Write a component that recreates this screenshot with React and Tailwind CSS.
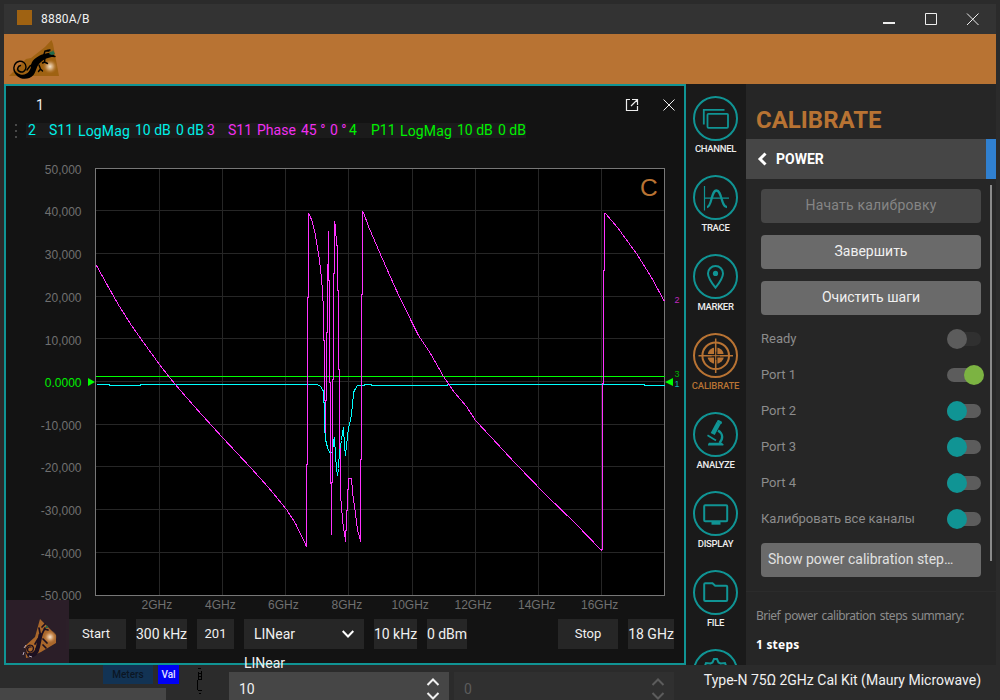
import React from 'react';

const TRACE_ROWS = [
  { color: 'text-[#00f0e8]', start: 'w-[180px]', cells: [['2', 'w-[21px]'], ['S11', 'w-[29px]'], ['LogMag', 'w-[57px]'], ['10 dB', 'w-[41px]'], ['0 dB', 'w-[30px]']] },
  { color: 'text-[#f030f0]', start: 'w-[142px] -ml-px', cells: [['3', 'w-[21px]'], ['S11', 'w-[29px]'], ['Phase', 'w-[44px]'], ['45 °', 'w-[29px]'], ['0 °', 'w-[16px]']] },
  { color: 'text-[#00f000]', start: 'w-[179px]', cells: [['4', 'w-[22px]'], ['P11', 'w-[29px]'], ['LogMag', 'w-[57px]'], ['10 dB', 'w-[41px]'], ['0 dB', 'w-[28px]']] },
];

const GRID_X = [159, 222, 285, 348, 412, 475, 538, 601];
const GRID_Y = [210, 253, 296, 338, 381, 424, 466, 509, 552];
const Y_LABELS = [['50,000', 169], ['40,000', 211], ['30,000', 254], ['20,000', 297], ['10,000', 340], ['0.0000', 382], ['-10,000', 425], ['-20,000', 467], ['-30,000', 510], ['-40,000', 553], ['-50,000', 595]];
const X_LABELS = [['2GHz', 141.5], ['4GHz', 205], ['6GHz', 268], ['8GHz', 331.5], ['10GHz', 391.5], ['12GHz', 454.5], ['14GHz', 518], ['16GHz', 581]];

const PHASE =
  '96,265 107,285 119,306 131,325 143,342 159,364 169,377 180,390 193,405 212,426 222,437 236,452 250,467 268,487 286,509 295,523 306,546 306,464 307,464 307,297 308,297 308,213 309,214 312,222 315,235 318,253 320,268 322,290 323,310 323,340 324,340 324,400 325,400 325,432 325,400 326,400 326,332 327,332 327,264 328,264 328,230 328,280 329,280 329,382 330,382 330,483 331,483 331,534 331,482 332,482 332,379 333,379 333,273 334,273 334,221 335,226 336,245 337,245 337,290 338,290 338,369 339,369 339,448 340,448 340,494 341,506 342,518 343,528 344,532 345,541 345,530 346,530 346,510 347,510 347,489 348,489 348,478 351,478 352,490 353,500 354,505 355,514 356,520 357,530 359,536 360,541 360,459 361,459 361,294 362,294 362,211 363,212 368,226 380,254 396,290 412,323 418,335 430,353 443,376 454,392 466,406 475,420 490,436 515,463 545,494 575,523 601,550 601,549 602,549 602,383 603,383 603,270 604,270 604,213 605,213 617,227 625,238 636,253 651,277 664,301';

const MAG =
  '96,384 109,384 109,385 140,385 140,384 317,384 320,386 322,389 323,391 323,402 324,402 324,425 325,439 327,447 329,452 332,452 333,441 334,437 335,455 336,468 337,475 338,468 339,450 341,440 342,432 343,427 344,445 345,455 346,445 348,427 350,420 352,405 353,392 355,388 357,385 364,385 364,384 371,384 371,385 447,385 447,384 644,384 644,385 664,385';

function Chart() {
  return (
    <svg className="block h-[474px] w-[678px]" viewBox="6 139 678 474" fontFamily='"Liberation Sans", Arial, sans-serif'>
      <g shapeRendering="crispEdges">
        <rect x="95" y="168" width="570" height="428" fill="#000" />
        {GRID_X.map((x) => <rect key={x} x={x} y="168" width="1" height="427" fill="#262626" />)}
        {GRID_Y.map((y) => <rect key={y} x="95" y={y} width="569" height="1" fill="#262626" />)}
        <rect x="95.5" y="168.5" width="569" height="427" fill="none" stroke="#777" />
      </g>
      <text x="640" y="196" fontSize="24.500" fill="#b87333">C</text>
      <g fill="none" strokeWidth="1" shapeRendering="crispEdges" transform="translate(.5 .5)">
        <path d="M95 376H664" stroke="#00ff00" />
        <polyline points={MAG} stroke="#00ffff" />
        <polyline points={PHASE} stroke="#ff33ff" />
      </g>
      <path d="M88 378l7 4-7 4zM665 382l8-4v8z" fill="#00ff00" />
      <g fontSize="12">
        {Y_LABELS.map(([t, y]) => (
          <text key={t} x="81.500" y={y + 5} textAnchor="end" fill={t === '0.0000' ? '#00f000' : '#707070'}>{t}</text>
        ))}
        {X_LABELS.map(([t, x]) => <text key={t} x={x} y="609" fill="#707070">{t}</text>)}
      </g>
      <g fontSize="9">
        <text x="674.5" y="303" fill="#c028c0">2</text>
        <text x="674.5" y="377" fill="#00b000">3</text>
        <text x="674.5" y="386.500" fill="#10b0b0">1</text>
      </g>
    </svg>
  );
}

function Gecko() {
  return (
    <svg className="block h-[42px] w-[54px]" viewBox="8 39 54 42">
      <defs>
        <radialGradient id="orb">
          <stop offset="0" stopColor="#f4e2c8" />
          <stop offset=".45" stopColor="#c99a63" />
          <stop offset="1" stopColor="#a8661c" stopOpacity="0" />
        </radialGradient>
      </defs>
      <path d="M51.5 40 L53 44 L59 76 H9 L26 59 L31 58 L45 47Z" fill="#9f6212" />
      <circle cx="50" cy="66.500" r="7.500" fill="url(#orb)" />
      <g fill="none" stroke="#000" strokeLinecap="round" strokeLinejoin="round">
        <path d="M20.500 65.500c-3 .5-4 4.500-1 6 3 1.500 6.500-.5 6.500-4.500 0-4-3.500-6-6.500-5.700-4.500.5-7 6-5 10.200" strokeWidth="1.400" />
        <path d="M34 64l-4 2-3 4M39 65l1.500 4-2 2.500M40.500 69l2 2M43.500 56l1.500-5 4 0M47 50.500l3-.5M45 58l-.5 4 3 1.500M44.500 62l-2 1M50 56l5 .5" strokeWidth="1.400" />
      </g>
      <path d="M13.500 69C14.500 79 27 82 33.500 75C37 70 36 66 41 62C45 58 49 58 54.500 56L52 52.500L48 53L42 54.500C36 57 31 61 31 66C31 70 27 76 20.500 74.500C17 73.500 15 71 13.500 69Z" fill="#000" />
      <path d="M49 54l2-3 1 1 1-2 2 4-3 1z" fill="#226b4c" />
    </svg>
  );
}

function GeckoSmall() {
  return (
    <svg className="block h-[63px] w-[63px]" viewBox="6 600 63 63">
      <defs>
        <radialGradient id="orb2">
          <stop offset="0" stopColor="#f6e4d0" />
          <stop offset=".5" stopColor="#c98d55" />
          <stop offset="1" stopColor="#a5642b" stopOpacity="0" />
        </radialGradient>
      </defs>
      <path d="M40 619 L47 626 L56 635 V643 L41 652 L30 657 L26 658 L25 646 L35 637Z" fill="#a9672b" />
      <circle cx="50" cy="637" r="7" fill="url(#orb2)" />
      <g fill="none" stroke="#1c1020" strokeLinecap="round">
        <path d="M31 647c-3-1-5 3-2 5 4 1 6-4 3-6.500-5-2-8 4.500-5 8.500" strokeWidth="1.300" />
        <path d="M29 655c6 1 8-3 9-8l2.500-12" strokeWidth="4" />
        <path d="M41 636l4-8M38 639l-3 5M40 633l-1-5M44 629l4 1M42 627l3-3M43 639l4 4M38 646l-2 3M43 645l3 3" strokeWidth="1.700" />
      </g>
      <path d="M24 648l2-3M24 652l-1 3M29 656l3 1" stroke="#b8a8b8" />
      <path d="M45 628l2-3 1 3z" fill="#226b4c" />
    </svg>
  );
}

const ICONS = {
  CHANNEL: (
    <g strokeWidth="1.800">
      <path d="M10.800 28.500V13.800H31.500" />
      <rect x="14.500" y="17.800" width="20.500" height="14" rx="1" />
    </g>
  ),
  TRACE: (
    <g>
      <path d="M11.500 11V35.500M11.500 23.200H36" strokeWidth="1.200" />
      <path d="M14 32c5 0 4-16.500 9.500-16.500S28 32 34 32" strokeWidth="2.300" />
    </g>
  ),
  MARKER: (
    <g>
      <path d="M22.500 12.100c-4.300 0-7.500 3.200-7.500 7.300 0 4.800 7.500 14.300 7.500 14.300S30 24.200 30 19.400c0-4.100-3.200-7.300-7.500-7.300z" strokeWidth="2" />
      <circle cx="22.500" cy="19.400" r="2.600" fill="currentColor" stroke="none" />
    </g>
  ),
  CALIBRATE: (
    <g>
      <circle cx="22.700" cy="22.700" r="13.300" strokeWidth="2" />
      <circle cx="22.700" cy="22.700" r="8.300" fill="currentColor" stroke="none" />
      <path d="M22.700 12.500V33M12.500 22.700H33" stroke="#1a1a1a" strokeWidth="3.400" />
      <path d="M22.700 5.500V18.500M22.700 27V40M5.500 22.700H18.500M27 22.700H40" strokeWidth="1.500" />
      <path d="M22.700 18V27.500M18 22.700H27.500" strokeWidth="1" />
    </g>
  ),
  ANALYZE: (
    <g>
      <path d="M25.700 10.800l-6 11.200" strokeWidth="4.600" />
      <path d="M25.500 9.500l2 1" strokeWidth="3" strokeLinecap="round" />
      <path d="M14.500 23.300l8.500 5.200" strokeWidth="1.600" />
      <path d="M25 18.500c5 3 5.500 8 1.500 12.500" strokeWidth="2.300" />
      <path d="M15 33.500v-1.300l1-1.500h13l1.300 1.500v1.300z" fill="currentColor" stroke="none" />
    </g>
  ),
  DISPLAY: (
    <g>
      <rect x="11.200" y="14.200" width="23" height="16" rx="1" strokeWidth="2" />
      <path d="M18.500 32.200H27.500" strokeWidth="3" />
    </g>
  ),
  FILE: <path d="M11.200 14.200a1 1 0 0 1 1-1h7.300l2.700 2.500h11a1 1 0 0 1 1 1v13.300a1 1 0 0 1-1 1h-21a1 1 0 0 1-1-1z" strokeWidth="2" />,
};

function RailItem({ name, active }) {
  return (
    <div className={active ? 'flex h-[79px] shrink-0 flex-col items-center text-[#b87333]' : 'flex h-[79px] shrink-0 flex-col items-center text-[#109494]'}>
      <svg className="h-[45px] w-[45px] shrink-0" viewBox="0 0 45 45" fill="none" stroke="currentColor">
        <circle cx="22.500" cy="22.500" r="21.500" strokeWidth="2" />
        {ICONS[name]}
      </svg>
      <span className={active ? 'mt-px text-[9.5px] leading-[14px] font-medium tracking-[-.2px]' : 'mt-px text-[9.5px] leading-[14px] font-medium tracking-[-.3px] text-[#ececec]'}>{name}</span>
    </div>
  );
}

function Toggle({ label, state }) {
  const knob = { off: 'left-0 bg-[#109494]', on: 'left-[17px] bg-[#7cb342]', disabled: 'left-0 bg-[#5c5c5c]' }[state];
  return (
    <div className="flex h-9 items-center justify-between text-[#8c8c8c]">
      <span className="text-[13px]">{label}</span>
      <span className={state === 'disabled' ? 'relative h-3.5 w-[34px] rounded-full bg-[#303030]' : 'relative h-3.5 w-[34px] rounded-full bg-[#5c5c5c]'}>
        <span className={'absolute -top-[3px] h-5 w-5 rounded-full ' + knob} />
      </span>
    </div>
  );
}

function Spinner({ value, muted }) {
  return (
    <div className={muted ? 'flex h-[30px] w-[220px] justify-between bg-[#303030] pr-[9px] pl-2.5 text-[#5c5c5c]' : 'flex h-[30px] w-[220px] justify-between bg-[#464646] pr-[9px] pl-2.5 text-[#f0f0f0]'}>
      <span className="pt-[7px] text-[14px] leading-5">{value}</span>
      <svg className="mt-1 h-[26px] w-[14px]" viewBox="0 0 14 26" fill="none" stroke="currentColor" strokeWidth="2">
        <path d="M1.500 9L7 3.500 12.500 9M1.500 17L7 22.500 12.500 17" />
      </svg>
    </div>
  );
}

export default function App() {
  return (
    <div className="relative flex h-[700px] w-[1000px] flex-col overflow-hidden bg-[#2b2b2b] px-1 pt-1 font-['Roboto',sans-serif] text-[#f0f0f0]">
      <header className="flex h-[30px] shrink-0 items-center bg-[#333333] pl-[13px]">
        <span className="mb-[3px] h-[15px] w-[15px] bg-[#9f6212]" />
        <span className="ml-[9px] text-[12px] leading-4 tracking-[.2px]">8880A/B</span>
        <svg className="ml-auto h-[30px] w-[130px]" viewBox="866 4 130 30" fill="none" stroke="#ededed">
          <path d="M883 23H895" strokeWidth="2" />
          <path d="M925.500 13.500H936.500V24.500H925.500Z" />
          <path d="M967 13.500L978.500 25M978.500 13.500L967 25" />
        </svg>
      </header>
      <div className="h-[50px] shrink-0 bg-[#b87333] pt-[5px] pl-1"><Gecko /></div>

      <div className="flex h-[581px] shrink-0">
        <main className="relative flex w-[682px] flex-col border-2 border-[#109494] bg-[#131313]">
          <div className="flex h-[37px] shrink-0 pt-[11px] pl-[30px]">
            <span className="text-[14px] leading-4">1</span>
            <svg className="ml-auto h-[16px] w-[66px]" viewBox="618 97 66 16" fill="none" stroke="#ededed">
              <path d="M630 99.500H626.500V110.500H637.500V106M632 99.500H637.500V105M637 100L631 106" strokeWidth="1.200" />
              <path d="M663.500 99.500L674.500 110.500M674.500 99.500L663.500 110.500" />
            </svg>
          </div>
          <div className="flex h-4 shrink-0 pl-[9px] text-[14px] leading-[14px]">
            <div className="flex w-[11px] flex-col gap-1 pt-px">
              <i className="h-0.5 w-0.5 bg-[#484848]" /><i className="h-0.5 w-0.5 bg-[#484848]" /><i className="h-0.5 w-0.5 bg-[#484848]" />
            </div>
            <div className="flex h-[15px]">
              {TRACE_ROWS.map((row, i) => (
                <div key={i} className={'flex bg-[#1b1b1b] pl-0.5 whitespace-nowrap ' + row.start + ' ' + row.color}>
                  {row.cells.map(([t, w]) => (
                    <span key={t} className={(t === 'LogMag' ? 'shrink-0 pt-px tracking-[.15px] ' : 'shrink-0 ') + w}>{t}</span>
                  ))}
                </div>
              ))}
            </div>
          </div>
          <Chart />
          <div className="relative flex h-[50px] shrink-0 pt-1.5 pr-2.5 pl-[60px] text-[14px] whitespace-nowrap">
            <div className="flex h-[30px] w-full gap-2.5">
              <span className="flex w-[60px] items-center justify-center bg-[#262626] text-[13px]">Start</span>
              <span className="flex w-[51px] items-center justify-center bg-[#262626]">300 kHz</span>
              <span className="flex w-[37px] items-center justify-center bg-[#262626] text-[13px]">201</span>
              <span className="flex w-[120px] items-center justify-between bg-[#262626] pr-2.5 pl-2.5">
                LINear
                <svg className="h-2 w-3" viewBox="0 0 12 8" fill="none" stroke="#fff" strokeWidth="2"><path d="M.7 1L6 6.500 11.300 1" /></svg>
              </span>
              <span className="flex w-[43px] items-center justify-center bg-[#262626]">10 kHz</span>
              <span className="flex w-[40px] items-center justify-center bg-[#262626]">0 dBm</span>
              <span className="ml-auto flex w-[60px] items-center justify-center bg-[#262626] text-[13px]">Stop</span>
              <span className="flex w-[46px] items-center justify-center bg-[#262626]">18 GHz</span>
            </div>
          </div>
          <div className="absolute bottom-0 left-0 h-[63px] w-[63px] bg-[#2c1f29]/95"><GeckoSmall /></div>
          <span className="absolute top-[569px] left-[238px] text-[14px] leading-4">LINear</span>
        </main>

        <nav className="flex w-[60px] flex-col overflow-hidden bg-[#1a1a1a] pt-3 pr-px">
          {Object.keys(ICONS).map((n) => <RailItem key={n} name={n} active={n === 'CALIBRATE'} />)}
          <svg className="h-[45px] w-[45px] shrink-0 self-center text-[#109494]" viewBox="0 0 45 45" fill="none" stroke="currentColor" strokeWidth="2">
            <circle cx="22.500" cy="22.500" r="21.500" />
            <path d="M11.500 18l1.500-4 4.500.5 2-1 1.500-3.500h3l1.500 3.500 2 1 4.500-.5 1.500 4" />
            <circle cx="22.500" cy="22.500" r="5" />
          </svg>
        </nav>

        <aside className="flex w-[250px] flex-col overflow-hidden bg-[#262626]">
          <h1 className="h-[55px] shrink-0 pt-[22px] pl-2.5 text-[24px] leading-[28px] font-bold text-[#b87333]">CALIBRATE</h1>
          <div className="flex h-10 shrink-0 items-center border-r-10 border-[#3080d0] bg-[#464646] pl-[11px]">
            <svg className="h-[14px] w-[10px]" viewBox="0 0 10 14" fill="none" stroke="#fff" strokeWidth="3"><path d="M8.500 1.500L3 7l5.500 5.500" /></svg>
            <span className="ml-[9px] text-[14px] font-bold text-white">POWER</span>
          </div>
          <div className="flex h-[413px] shrink-0 border-b border-[#2b2b2b] pt-1.5">
            <div className="w-[244px] px-[15px] pt-1 pr-[9px] text-[14px]">
              <div className="flex flex-col gap-3">
                <div className="flex h-[34px] items-center justify-center rounded bg-[#464646] pb-0.5 tracking-[.2px] text-[#858585]">Начать калибровку</div>
                <div className="flex h-[34px] items-center justify-center rounded bg-[#6a6a6a] pb-0.5">Завершить</div>
                <div className="flex h-[34px] items-center justify-center rounded bg-[#6a6a6a] pb-0.5">Очистить шаги</div>
              </div>
              <div className="mt-1.5">
                <Toggle label="Ready" state="disabled" />
                <Toggle label="Port 1" state="on" />
                <Toggle label="Port 2" state="off" />
                <Toggle label="Port 3" state="off" />
                <Toggle label="Port 4" state="off" />
                <Toggle label="Калибровать все каналы" state="off" />
              </div>
              <div className="mt-1.5 flex h-[34px] items-center rounded bg-[#6a6a6a] pb-0.5 pl-[7px] text-[#e0e0e0]">Show power calibration step…</div>
            </div>
            <div className="h-[376px] w-0.5 bg-[#8a8a8a]" />
          </div>
          <div className="px-2.5 pt-[16px] font-['Noto_Sans',sans-serif] text-[12px] leading-4">
            <p className="tracking-[-.5px] whitespace-nowrap text-[#8c8c8c] [word-spacing:1.5px]">Brief power calibration steps summary:</p>
            <p className="mt-[13px] font-bold tracking-[.2px] text-white">1 steps</p>
          </div>
        </aside>
      </div>

      <footer className="-mx-1 flex h-[35px] shrink-0 items-start">
        <div className="flex h-[35px] w-[229px] flex-col justify-between">
          <div className="flex pl-[103px] text-[10px] font-medium">
            <span className="flex h-[19px] w-[50px] items-center justify-center bg-[#123354] text-[#0b1624]">Meters</span>
            <span className="ml-[5px] flex h-[19px] w-[21px] items-center justify-center bg-[#0000f5] text-[#e0e0ff]">Val</span>
            <svg className="mt-[2px] ml-[17px] h-[30px] w-2" viewBox="196 667 8 30" fill="none" stroke="#000" shapeRendering="crispEdges">
              <path d="M198 668.500H201M198.500 672V680M201.500 671V680M199 673.500H201M199 676.500H201M198 679.500H201M197.500 680V690M198 690.500H202M199 693.500H201" />
            </svg>
          </div>
          <div className="-mt-6 h-3 w-[166px] shrink-0 bg-[#464646]" />
        </div>
        <div className="flex gap-[5px] overflow-hidden pt-[7px]">
          <Spinner value="10" />
          <Spinner value="0" muted />
        </div>
        <span className="ml-auto pt-[6px] pr-[19px] text-[14px] leading-[18px]">Type-N 75Ω 2GHz Cal Kit (Maury Microwave)</span>
      </footer>
    </div>
  );
}
